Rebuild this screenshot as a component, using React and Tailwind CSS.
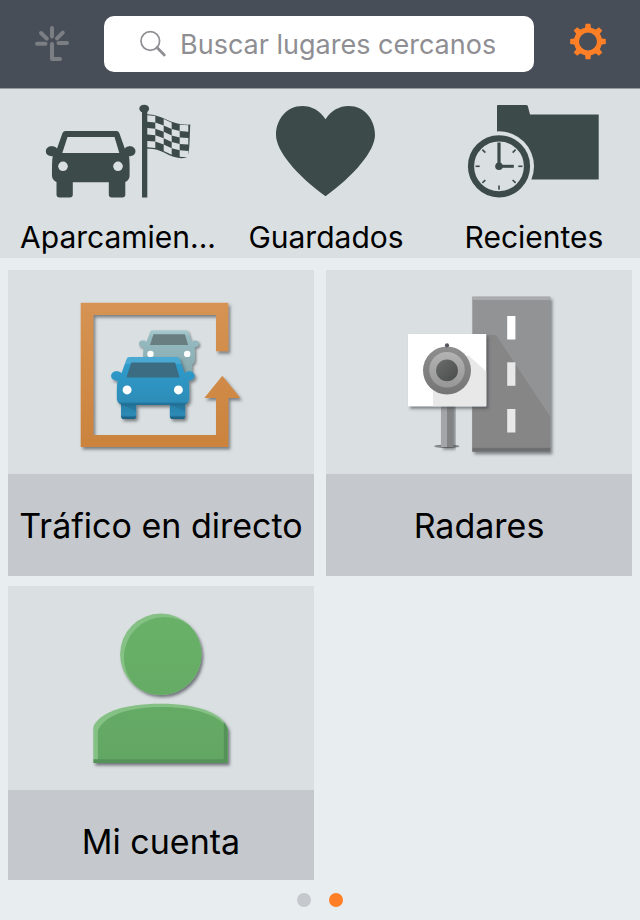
import React from 'react'

const INK = '#3c4b4a';

const CAR_BODY =
  'M65.5 131 H116.5 Q118.5 131 119.3 133 L124.8 148.5 A5.4 5 0 1 1 129 156.3 Q129.8 160 129.6 176 Q129.3 180 125.3 182 V194.5 Q125.3 197.5 122.3 197.5 H111.8 Q108.8 197.5 108.8 194.5 V182.3 H72.8 V194.5 Q72.8 197.5 69.8 197.5 H59.5 Q56.5 197.5 56.5 194.5 V182 Q52.3 180 52 176 Q51.8 160 52.8 156.3 A5.4 5 0 1 1 57 148.5 L62.5 133 Q63.3 131 65.5 131 Z M45.8 151.2 a5.3 4.9 0 1 1 10.6 0 a5.3 4.9 0 1 1 -10.6 0 Z M124.9 151.2 a5.3 4.9 0 1 1 10.6 0 a5.3 4.9 0 1 1 -10.6 0 Z';
const CAR_WINDOW = 'M67.5 137 H114.5 L119.3 153 H62.3 Z';

function Car({ body, glass, lights, transform, filter }) {
  return (
    <g transform={transform} filter={filter}>
      <path d={CAR_BODY} fill={body} />
      <path d={CAR_WINDOW} fill={glass} />
      <circle cx="63" cy="166.3" r="4.8" fill={lights} />
      <circle cx="118" cy="166.3" r="4.8" fill={lights} />
    </g>
  );
}

function ParkingIcon() {
  const xs = [147.3, 155.3, 163.7, 171.7, 179.7, 188.3];
  const tops = [115.3, 116, 119, 122.7, 124.7, 125.3];
  const rowHeight = 6.4;
  const cells = [];
  for (let c = 0; c < 5; c++) {
    for (let r = 0; r < 5; r++) {
      if ((c + r) % 2 === 0) {
        const a = tops[c] + r * rowHeight;
        const b = tops[c + 1] + r * rowHeight;
        cells.push(`M${xs[c]} ${a} L${xs[c + 1]} ${b} V${b + rowHeight} L${xs[c]} ${a + rowHeight} Z`);
      }
    }
  }
  return (
    <svg viewBox="43 102 150 100" className="h-[100px] w-[150px]" aria-hidden="true">
      <Car body={INK} glass="#dadfe2" lights="#dadfe2" />
      <rect x="142" y="110" width="5.3" height="87.5" fill={INK} />
      <ellipse cx="144.2" cy="108.7" rx="4.9" ry="4" fill={INK} />
      <path d="M147 114.3 C163 114.5 170 125.5 190.3 124.6 C189.5 137 190 150 187.6 156.5 C184 159.5 174 158.5 164 152.5 C157 149 152 148.5 147 148.8 Z" fill={INK} />
      <path d={cells.join(' ')} fill="#dadfe2" />
    </svg>
  );
}

function HeartIcon() {
  return (
    <svg viewBox="251 102 150 100" className="h-[100px] w-[150px]" aria-hidden="true">
      <path d="M325.5 119.3 C320 110.5 311.5 106 302.5 106 C286.5 106 276 119.5 276 135 C276 151 297 175.5 325.5 196.2 C354 175.5 375 151 375 135 C375 119.5 364.5 106 348.5 106 C339.5 106 331 110.5 325.5 119.3 Z" fill={INK} />
    </svg>
  );
}

function RecentIcon() {
  return (
    <svg viewBox="459 102 150 100" className="h-[100px] w-[150px]" aria-hidden="true">
      <path d="M497 106 Q497 105 498 105 H526 Q527.5 105 527.8 106 L530 114.5 H598.7 V179.5 H497 Z" fill={INK} />
      <circle cx="499" cy="166.3" r="35" fill="#dadfe2" />
      <circle cx="499" cy="166.3" r="28" fill="none" stroke={INK} strokeWidth="6.2" />
      {[45, 90, 135, 180, 225, 270, 315].map((angle) => (
        <path key={angle} d="M499 147 V142.8" stroke={INK} strokeWidth="1.6" transform={`rotate(${angle} 499 166.3)`} />
      ))}
      <path d="M499 166.3 V142.5" stroke={INK} strokeWidth="3.2" />
      <path d="M499 166.3 H513.8" stroke={INK} strokeWidth="3" />
      <circle cx="499" cy="166.3" r="3.8" fill={INK} />
    </svg>
  );
}

function TrafficIcon() {
  return (
    <svg viewBox="71 282 180 180" className="size-[180px]" aria-hidden="true">
      <defs>
        <linearGradient id="orange" x1="0" y1="0" x2="0" y2="1">
          <stop offset="0" stopColor="#d69353" />
          <stop offset="1" stopColor="#cb833d" />
        </linearGradient>
        <linearGradient id="blue" x1="0" y1="0" x2="0" y2="1">
          <stop offset="0" stopColor="#4aa9d3" />
          <stop offset="0.1" stopColor="#4aa9d3" />
          <stop offset="0.12" stopColor="#2f9bcb" />
          <stop offset="0.72" stopColor="#2d8db8" />
          <stop offset="0.76" stopColor="#1f6d93" />
          <stop offset="0.8" stopColor="#2b83ac" />
          <stop offset="0.94" stopColor="#2d8ab5" />
          <stop offset="0.97" stopColor="#1b6488" />
          <stop offset="1" stopColor="#1b6488" />
        </linearGradient>
        <linearGradient id="pale" x1="0" y1="0" x2="0" y2="1">
          <stop offset="0" stopColor="#a8c9cd" />
          <stop offset="0.1" stopColor="#9dc1c6" />
          <stop offset="0.14" stopColor="#95bbc1" />
          <stop offset="1" stopColor="#87a9ae" />
        </linearGradient>
        <filter id="trafficShadow" x="-20%" y="-20%" width="140%" height="140%">
          <feDropShadow dx="2" dy="2.5" stdDeviation="1.6" floodColor="#3b3f45" floodOpacity="0.6" />
        </filter>
      </defs>
      <path d="M80.7 302.7 H228.3 V351.2 H216 V315 H93.3 V435 H216 V398 H204.3 L222.3 375.8 L240.3 398 H228.3 V447 H80.7 Z" fill="url(#orange)" filter="url(#trafficShadow)" />
      <Car body="url(#pale)" glass="#687e80" lights="#fff" transform="translate(108.4 242.8) scale(0.668)" filter="url(#trafficShadow)" />
      <Car body="url(#blue)" glass="#3a6c82" lights="#fff" transform="translate(68.3 234.8) scale(0.933)" filter="url(#trafficShadow)" />
      <path d="M121.5 404.5 H136 V411 Z M170.5 404.5 H185 V411 Z" fill="#236f94" opacity="0.6" />
    </svg>
  );
}

function RadarIcon() {
  return (
    <svg viewBox="389 282 180 180" className="size-[180px]" aria-hidden="true">
      <defs>
        <linearGradient id="lensOuter" x1="0" y1="0" x2="0" y2="1">
          <stop offset="0" stopColor="#8e8e8e" />
          <stop offset="1" stopColor="#757575" />
        </linearGradient>
        <linearGradient id="lensMid" x1="0" y1="0" x2="0" y2="1">
          <stop offset="0" stopColor="#b3b3b3" />
          <stop offset="1" stopColor="#979797" />
        </linearGradient>
        <linearGradient id="lensInner" x1="0" y1="0" x2="1" y2="1">
          <stop offset="0" stopColor="#6b6d6c" />
          <stop offset="1" stopColor="#4a4c4b" />
        </linearGradient>
        <filter id="radarShadow" x="-20%" y="-20%" width="140%" height="140%">
          <feDropShadow dx="2" dy="2.5" stdDeviation="1.6" floodColor="#3b3f45" floodOpacity="0.6" />
        </filter>
      </defs>
      <rect x="472.3" y="296.7" width="78" height="155" fill="#929394" filter="url(#radarShadow)" />
      <rect x="472.3" y="296.7" width="78" height="3.3" fill="#a9abac" />
      <path d="M472.3 335 H496 L550.3 416.7 V448 H472.3 Z" fill="#868687" />
      <rect x="472.3" y="447.8" width="78" height="3.9" fill="#6d6e70" />
      <rect x="507.2" y="316" width="8.2" height="23.5" fill="#fff" />
      <rect x="507.2" y="362.3" width="8.2" height="23.5" fill="#e8e8e8" />
      <rect x="507.2" y="409" width="8.2" height="23.5" fill="#e8e8e8" />
      <ellipse cx="446.8" cy="446.3" rx="12.6" ry="1.8" fill="#85888a" />
      <g filter="url(#radarShadow)">
        <rect x="441" y="400" width="6" height="47" fill="#a3a5a7" />
        <rect x="447" y="400" width="6.5" height="47" fill="#828385" />
      </g>
      <rect x="408" y="334" width="78.2" height="72.3" rx="0.6" fill="#fff" filter="url(#radarShadow)" />
      <path d="M468 355 L486.2 371.5 V406.3 H433 V382 Z" fill="#e8e8e8" />
      <circle cx="447" cy="370.5" r="24" fill="url(#lensOuter)" />
      <circle cx="447" cy="369.8" r="17.8" fill="url(#lensMid)" />
      <circle cx="447" cy="370.4" r="10.9" fill="url(#lensInner)" />
      <circle cx="447" cy="345.4" r="2.1" fill="#545560" />
    </svg>
  );
}

function AccountIcon() {
  const shoulders = 'M93.3 763 V727 C98 713.5 122 703.7 160.5 703.7 C199 703.7 223 713.5 227.7 729 V763 Z';
  return (
    <svg viewBox="71 598 180 180" className="size-[180px]" aria-hidden="true">
      <defs>
        <linearGradient id="green" gradientUnits="userSpaceOnUse" x1="0" y1="614" x2="0" y2="763">
          <stop offset="0" stopColor="#69b168" />
          <stop offset="1" stopColor="#62a663" />
        </linearGradient>
        <clipPath id="headClip"><circle cx="160.8" cy="654.3" r="40.7" /></clipPath>
        <clipPath id="bodyClip"><path d={shoulders} /></clipPath>
        <filter id="accountShadow" x="-20%" y="-20%" width="140%" height="140%">
          <feDropShadow dx="2" dy="2.5" stdDeviation="1.6" floodColor="#3b3f45" floodOpacity="0.65" />
        </filter>
      </defs>
      <circle cx="160.8" cy="654.3" r="40.7" fill="#85c084" filter="url(#accountShadow)" />
      <circle cx="164.6" cy="657.6" r="40.7" fill="url(#green)" clipPath="url(#headClip)" />
      <path d={shoulders} fill="#85c084" filter="url(#accountShadow)" />
      <g clipPath="url(#bodyClip)">
        <path d="M97.8 766 V731 C103 716.5 126 707 162 707 C199 707 223 717 229 731 V766 Z" fill="url(#green)" />
        <path d="M93.3 761.2 H225.8 V720" fill="none" stroke="#55925a" strokeWidth="4" />
      </g>
    </svg>
  );
}

function LogoIcon() {
  return (
    <svg viewBox="34 24 36 40" className="h-10 w-9" fill="none" stroke="#7b7e83" strokeWidth="4" strokeLinecap="round" strokeLinejoin="round" aria-hidden="true">
      <path d="M52 28 V36.5 M37 43.8 H45.5 M58.5 43 H67 M41 33 L46.8 38.6 M62.8 32.6 L57 38.4 M52 44 V59 H60" />
    </svg>
  );
}

function GearIcon() {
  return (
    <svg viewBox="570 23 36 42" className="h-[42px] w-9" aria-hidden="true">
      <circle cx="588" cy="41.5" r="11.5" fill="none" stroke="#ff7f27" strokeWidth="5" />
      {[0, 45, 90, 135, 180, 225, 270, 315].map((angle) => (
        <path key={angle} d="M583 30 L585.1 27.8 L585.6 23.7 H590.4 L590.9 27.8 L593 30 Z" fill="#ff7f27" transform={`rotate(${angle} 588 41.5)`} />
      ))}
    </svg>
  );
}

const shortcuts = [
  { label: 'Aparcamien...', Icon: ParkingIcon },
  { label: 'Guardados', Icon: HeartIcon },
  { label: 'Recientes', Icon: RecentIcon },
];

const tiles = [
  { label: 'Tráfico en directo', Icon: TrafficIcon },
  { label: 'Radares', Icon: RadarIcon },
  { label: 'Mi cuenta', Icon: AccountIcon },
];

function App() {
  return (
    <div className="flex h-screen flex-col bg-[#e8edf0] font-[Inter,sans-serif] text-black">
      <header className="flex shrink-0 items-center border-b border-[#969ba0] bg-[#484e58] py-4 pr-[34px] pl-[34px]">
        <button type="button" aria-label="Inicio" className="shrink-0">
          <LogoIcon />
        </button>
        <label className="mr-9 ml-[34px] flex h-14 min-w-0 flex-1 items-center gap-3 rounded-[10px] bg-white pr-4 pl-9">
          <svg viewBox="140 30 28 28" className="size-7 shrink-0" fill="none" stroke="#8e8e93" aria-hidden="true">
            <circle cx="150.3" cy="41" r="9.3" strokeWidth="1.7" />
            <path d="M157 47.6 L164.3 55" strokeWidth="2.8" strokeLinecap="round" />
          </svg>
          <input
            type="search"
            aria-label="Buscar lugares cercanos"
            placeholder="Buscar lugares cercanos"
            className="h-full min-w-0 flex-1 bg-transparent text-[27px] outline-none placeholder:text-[#8e8e93]"
          />
        </label>
        <button type="button" aria-label="Ajustes" className="shrink-0">
          <GearIcon />
        </button>
      </header>

      <nav className="grid shrink-0 grid-cols-3 bg-[#dadfe2] pt-[13px] pr-0.5 pl-3.5">
        {shortcuts.map(({ label, Icon }) => (
          <button key={label} type="button" className="flex min-w-0 flex-col items-center">
            <Icon />
            <span className="mt-3.5 h-[42px] text-[30px] leading-[42px] whitespace-nowrap">{label}</span>
          </button>
        ))}
      </nav>

      <main className="mt-3 grid min-h-0 flex-1 grid-cols-2 content-start gap-x-3 gap-y-2.5 overflow-y-auto px-2 [scrollbar-width:none]">
        {tiles.map(({ label, Icon }) => (
          <button key={label} type="button" className="flex min-w-0 flex-col bg-[#dadfe2]">
            <span className="flex w-full justify-center py-3">
              <Icon />
            </span>
            <span className="w-full bg-[#c5c9cd] pt-[29px] pb-[27px] text-[34px] leading-[46px] whitespace-nowrap">{label}</span>
          </button>
        ))}
      </main>

      <footer className="flex h-10 shrink-0 items-center justify-center gap-[18px]">
        <button type="button" aria-label="Página 1" className="size-3.5 rounded-full bg-[#c5c9cd]"></button>
        <button type="button" aria-label="Página 2" aria-current="page" className="size-3.5 rounded-full bg-[#ff7f27]"></button>
      </footer>
    </div>
  )
}

export default App
